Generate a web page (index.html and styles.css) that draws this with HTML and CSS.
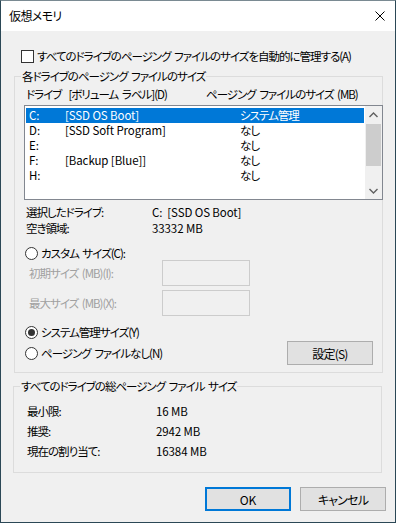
FILE: index.html
```html
<!DOCTYPE html>
<html lang="ja">
<head>
    <meta charset="UTF-8">
    <title>仮想メモリ</title>
    <link rel="stylesheet" href="styles.css">
</head>
<body>
<div class="window">
    <div class="titlebar">
        <span class="title">仮想メモリ</span>
        <svg class="close" width="10" height="10" viewBox="0 0 10 10">
            <path d="M0.5 0.5 L9.5 9.5 M9.5 0.5 L0.5 9.5" stroke="#000" stroke-width="1" fill="none"/>
        </svg>
    </div>

    <div class="content">
        <!-- auto manage -->
        <label class="check-row">
            <span class="checkbox"></span>
            <span>すべてのドライブのページング ファイルのサイズを自動的に管理する(A)</span>
        </label>

        <fieldset class="group group-drives">
            <legend>各ドライブのページング ファイルのサイズ</legend>

            <div class="list-head">
                <span class="head-drive">ドライブ&nbsp;&nbsp;[ボリューム ラベル](D)</span>
                <span class="head-size">ページング ファイルのサイズ (MB)</span>
            </div>

            <div class="listbox">
                <div class="rows">
                    <div class="row selected"><span class="c-drive">C:</span><span class="c-label">[SSD OS Boot]</span><span class="c-size">システム管理</span></div>
                    <div class="row"><span class="c-drive">D:</span><span class="c-label">[SSD Soft Program]</span><span class="c-size">なし</span></div>
                    <div class="row"><span class="c-drive">E:</span><span class="c-label"></span><span class="c-size">なし</span></div>
                    <div class="row"><span class="c-drive">F:</span><span class="c-label">[Backup [Blue]]</span><span class="c-size">なし</span></div>
                    <div class="row"><span class="c-drive">H:</span><span class="c-label"></span><span class="c-size">なし</span></div>
                </div>
                <div class="scrollbar">
                    <div class="arrow">
                        <svg width="9" height="6" viewBox="0 0 9 6"><path d="M0.5 5 L4.5 1 L8.5 5" stroke="#606060" stroke-width="1.4" fill="none"/></svg>
                    </div>
                    <div class="track"><div class="thumb"></div></div>
                    <div class="arrow">
                        <svg width="9" height="6" viewBox="0 0 9 6"><path d="M0.5 1 L4.5 5 L8.5 1" stroke="#606060" stroke-width="1.4" fill="none"/></svg>
                    </div>
                </div>
            </div>

            <div class="info">
                <span>選択したドライブ:</span><span class="val">C:&nbsp;&nbsp;[SSD OS Boot]</span>
                <span>空き領域:</span><span class="val">33332 MB</span>
            </div>

            <div class="radio-row custom">
                <span class="radio"></span>
                <span>カスタム サイズ(C):</span>
            </div>
            <div class="field-row">
                <span class="field-label">初期サイズ (MB)(I):</span>
                <span class="textbox"></span>
            </div>
            <div class="field-row second">
                <span class="field-label">最大サイズ (MB)(X):</span>
                <span class="textbox"></span>
            </div>

            <div class="radio-row system">
                <span class="radio checked"></span>
                <span>システム管理サイズ(Y)</span>
            </div>
            <div class="set-row">
                <div class="radio-row">
                    <span class="radio"></span>
                    <span>ページング ファイルなし(N)</span>
                </div>
                <button class="btn">設定(S)</button>
            </div>
        </fieldset>

        <fieldset class="group group-total">
            <legend>すべてのドライブの総ページング ファイル サイズ</legend>
            <div class="totals">
                <span>最小限:</span><span class="val">16 MB</span>
                <span>推奨:</span><span class="val">2942 MB</span>
                <span>現在の割り当て:</span><span class="val">16384 MB</span>
            </div>
        </fieldset>

        <div class="actions">
            <button class="btn default">OK</button>
            <button class="btn">キャンセル</button>
        </div>
    </div>
</div>
</body>
</html>
```

FILE: styles.css
```css
body {
    margin: 0;
    font-family: "Noto Sans CJK JP", sans-serif;
    font-size: 11.5px;
    font-feature-settings: "palt";
    letter-spacing: -1px;
    word-spacing: 2px;
    color: #000;
    white-space: nowrap;
}
.window {
    width: 396px;
    height: 523px;
    box-sizing: border-box;
    border: 1px solid #2b4856;
    border-top-color: #7a8a92;
    background: #f0f0f0;
}
.titlebar {
    height: 30px;
    background: #fff;
    display: flex;
    align-items: center;
    justify-content: space-between;
    padding: 0 10px 0 8px;
}
.title {
    font-size: 12px;
    line-height: 14px;
    letter-spacing: -0.6px;
}
.content {
    padding: 0 9px 0 13px;
}
.val {
    letter-spacing: -0.1px;
    word-spacing: 0;
}

/* checkbox */
.check-row {
    display: flex;
    align-items: center;
    gap: 3px;
    height: 14px;
    margin-top: 18px;
    padding-left: 7px;
    line-height: 14px;
}
.checkbox {
    width: 11px;
    height: 11px;
    border: 1px solid #333;
    background: #fff;
}

/* group boxes */
.group {
    margin: 6px 0 0 0;
    padding: 0;
    border: 1px solid #dcdcdc;
    box-sizing: border-box;
    width: 369px;
    min-width: 0;
}
.group legend {
    margin-left: 6px;
    padding: 0 1px;
    line-height: 14px;
}
.list-head {
    display: flex;
    line-height: 14px;
    margin-top: 4px;
    padding-left: 11px;
}
.head-drive {
    width: 180px;
}

/* list box */
.listbox {
    display: flex;
    width: 359px;
    height: 95px;
    box-sizing: border-box;
    margin: 4px 0 0 9px;
    border: 1px solid #828790;
    background: #fff;
}
.rows {
    flex: 1;
    padding: 2px 0 0 1px;
}
.row {
    display: flex;
    height: 15px;
    line-height: 15px;
    width: 338px;
    padding-left: 3px;
    box-sizing: border-box;
    overflow: hidden;
}
.row.selected {
    background: #0078d7;
    color: #fff;
}
.c-drive {
    width: 36px;
    letter-spacing: 0;
}
.c-label {
    width: 175px;
    letter-spacing: -0.1px;
    word-spacing: 0;
}
.scrollbar {
    width: 17px;
    background: #f0f0f0;
    display: flex;
    flex-direction: column;
}
.arrow {
    height: 17px;
    display: flex;
    align-items: center;
    justify-content: center;
}
.track {
    flex: 1;
    padding-top: 1px;
}
.thumb {
    height: 42px;
    margin: 0 1px;
    background: #cdcdcd;
}

/* selected drive info */
.info {
    display: grid;
    grid-template-columns: 126px auto;
    line-height: 16px;
    margin-top: 4px;
    padding-left: 11px;
}

/* radios */
.radio-row {
    display: flex;
    align-items: center;
    gap: 3px;
    height: 14px;
    line-height: 14px;
}
.custom {
    margin-top: 10px;
    padding-left: 10px;
}
.system {
    margin-top: 9px;
    padding-left: 10px;
}
.radio {
    width: 11px;
    height: 11px;
    border: 1px solid #333;
    border-radius: 50%;
    background: #fff;
    display: flex;
    align-items: center;
    justify-content: center;
}
.radio.checked::after {
    content: "";
    width: 7px;
    height: 7px;
    border-radius: 50%;
    background: #333;
}

/* disabled size fields */
.field-row {
    display: flex;
    align-items: center;
    height: 26px;
    padding-left: 14px;
}
.field-row.second {
    margin-top: 4px;
}
.field-label {
    width: 133px;
    color: #a0a0a0;
    line-height: 14px;
}
.textbox {
    width: 88px;
    height: 26px;
    box-sizing: border-box;
    border: 1px solid #cccccc;
    background: #f0f0f0;
}

.set-row {
    display: flex;
    align-items: center;
    justify-content: space-between;
    margin-top: 2px;
    padding: 0 9px 7px 10px;
}

/* buttons */
.btn {
    width: 86px;
    height: 24px;
    box-sizing: border-box;
    border: 1px solid #adadad;
    background: #e1e1e1;
    font-family: inherit;
    font-size: 12px;
    font-feature-settings: "palt";
    letter-spacing: -0.8px;
    color: #000;
    padding: 0;
}
.btn.default {
    border: 2px solid #0078d7;
    letter-spacing: 0;
}

/* totals */
.group-total {
    margin: 6px 0 0 -1px;
}
.totals {
    display: grid;
    grid-template-columns: 129px auto;
    line-height: 20px;
    margin-top: 8px;
    padding: 0 0 11px 13px;
}
.actions {
    display: flex;
    justify-content: flex-end;
    gap: 9px;
    margin-top: 14px;
}
```
